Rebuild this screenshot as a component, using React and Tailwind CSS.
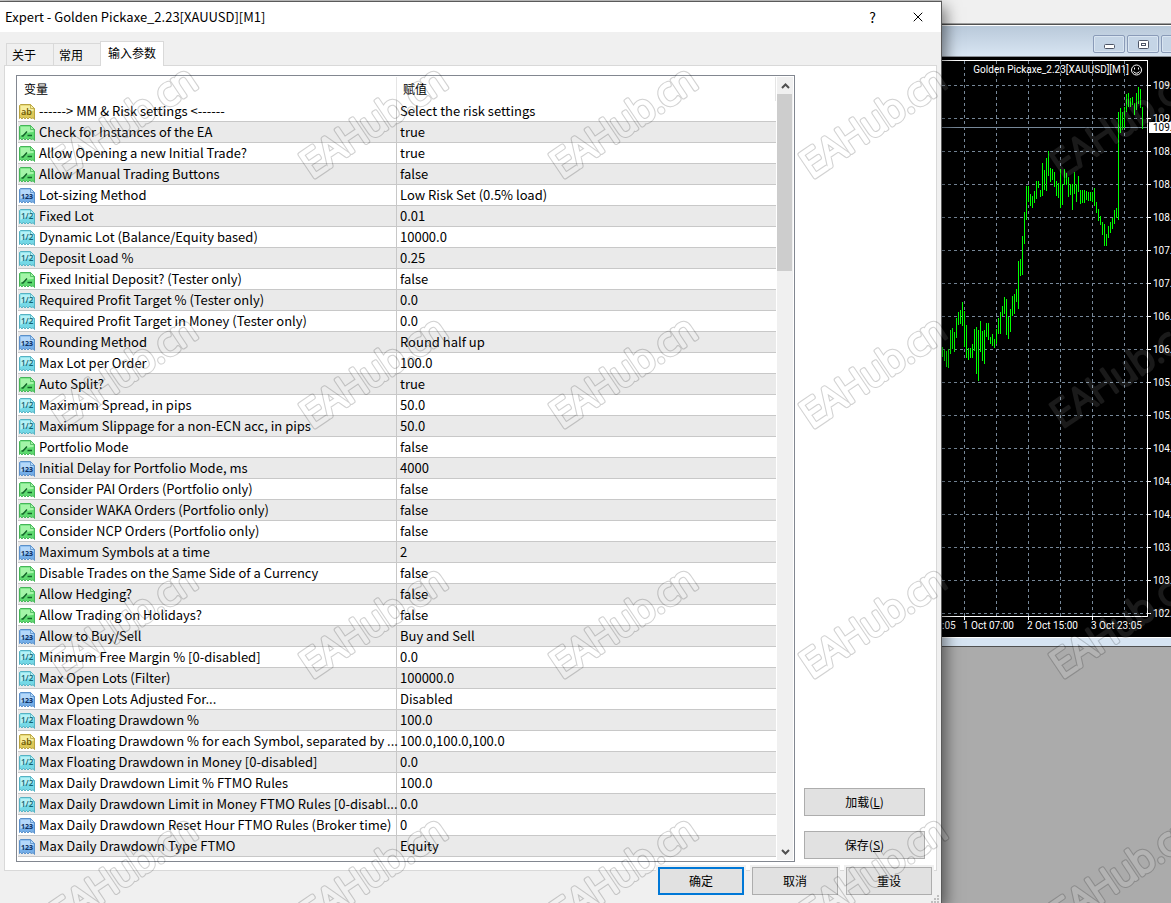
import React from "react";
import clsx from "clsx";
import { X } from "lucide-react";

const params = [
  ["ab", "------> MM & Risk settings <------", "Select the risk settings"],
  ["bool", "Check for Instances of the EA", "true"],
  ["bool", "Allow Opening a new Initial Trade?", "true"],
  ["bool", "Allow Manual Trading Buttons", "false"],
  ["int", "Lot-sizing Method", "Low Risk Set (0.5% load)"],
  ["real", "Fixed Lot", "0.01"],
  ["real", "Dynamic Lot (Balance/Equity based)", "10000.0"],
  ["real", "Deposit Load %", "0.25"],
  ["bool", "Fixed Initial Deposit? (Tester only)", "false"],
  ["real", "Required Profit Target % (Tester only)", "0.0"],
  ["real", "Required Profit Target in Money (Tester only)", "0.0"],
  ["int", "Rounding Method", "Round half up"],
  ["real", "Max Lot per Order", "100.0"],
  ["bool", "Auto Split?", "true"],
  ["real", "Maximum Spread, in pips", "50.0"],
  ["real", "Maximum Slippage for a non-ECN acc, in pips", "50.0"],
  ["bool", "Portfolio Mode", "false"],
  ["int", "Initial Delay for Portfolio Mode, ms", "4000"],
  ["bool", "Consider PAI Orders (Portfolio only)", "false"],
  ["bool", "Consider WAKA Orders (Portfolio only)", "false"],
  ["bool", "Consider NCP Orders (Portfolio only)", "false"],
  ["int", "Maximum Symbols at a time", "2"],
  ["bool", "Disable Trades on the Same Side of a Currency", "false"],
  ["bool", "Allow Hedging?", "false"],
  ["bool", "Allow Trading on Holidays?", "false"],
  ["int", "Allow to Buy/Sell", "Buy and Sell"],
  ["real", "Minimum Free Margin % [0-disabled]", "0.0"],
  ["real", "Max Open Lots (Filter)", "100000.0"],
  ["int", "Max Open Lots Adjusted For...", "Disabled"],
  ["real", "Max Floating Drawdown %", "100.0"],
  ["ab", "Max Floating Drawdown % for each Symbol, separated by ...", "100.0,100.0,100.0"],
  ["real", "Max Floating Drawdown in Money [0-disabled]", "0.0"],
  ["real", "Max Daily Drawdown Limit % FTMO Rules", "100.0"],
  ["real", "Max Daily Drawdown Limit in Money FTMO Rules [0-disabl...", "0.0"],
  ["int", "Max Daily Drawdown Reset Hour FTMO Rules (Broker time)", "0"],
  ["int", "Max Daily Drawdown Type FTMO", "Equity"],
];

// high / low of every bar, one bar each 2px
const bars = [
  [347, 357], [350, 361], [351, 367], [349, 368], [330, 354], [328, 349], [332, 352], [318, 338],
  [312, 325], [310, 324], [302, 326], [311, 347], [325, 358], [348, 360], [348, 358], [344, 358],
  [329, 351], [327, 374], [330, 381], [321, 352], [331, 361], [330, 364], [323, 337], [323, 340],
  [337, 344], [334, 346], [339, 348], [329, 344], [318, 334], [312, 334], [306, 316], [297, 314],
  [299, 335], [317, 339], [309, 332], [296, 316], [294, 314], [289, 302], [261, 309], [259, 276],
  [236, 275], [212, 244], [186, 220], [186, 202], [194, 206], [196, 208], [191, 203], [181, 199],
  [181, 188], [190, 197], [163, 196], [170, 190], [158, 191], [151, 176], [168, 182], [169, 180],
  [172, 187], [181, 196], [183, 198], [169, 208], [184, 205], [169, 185], [173, 185], [177, 197],
  [184, 195], [184, 210], [172, 194], [184, 202], [176, 192], [190, 204], [190, 203], [190, 203],
  [191, 200], [192, 201], [192, 201], [192, 202], [188, 206], [202, 213], [209, 221], [216, 225],
  [222, 235], [224, 246], [234, 246], [226, 238], [222, 233], [218, 229], [210, 224], [208, 218],
  [112, 220], [108, 133], [112, 130], [107, 128], [94, 112], [93, 107], [98, 107], [97, 105],
  [103, 115], [93, 110], [87, 104], [89, 108], [107, 129],
];

const prices = [
  "109.", "109.", "108.", "108.", "108.", "107.", "107.", "106.", "106.",
  "105.", "105.", "104.", "104.", "104.", "103.", "103.", "102.",
];

const gridX = [964, 996, 1028, 1060, 1092, 1124];

const iconColors = {
  ab: { light: "#f6eea0", dark: "#dcc858", edge: "#b9a440", ink: "#6b5600" },
  bool: { light: "#a4f5a8", dark: "#5edb70", edge: "#45b558", ink: "#14652a" },
  int: { light: "#b4d8fa", dark: "#74aee8", edge: "#5a90ca", ink: "#10315f" },
  real: { light: "#b5f1f6", dark: "#74d8e6", edge: "#55b2c3", ink: "#14606e" },
};

const TypeIcon = ({ type }) => {
  const c = iconColors[type];
  return (
    <svg width="16" height="16" viewBox="0 0 16 16" className="mt-0.5 shrink-0" aria-hidden="true">
      <path
        d="M1.5 .5H11.5L15.5 4.5V15.5L14 13.5L12.5 15L11 13L9 15L7.5 13.5L6 15L4.5 13L3 15L1.5 13.5L.5 14.5V1.5Z"
        fill={c.dark}
        stroke={c.edge}
      />
      <path d="M1.5 1.5H11L14.5 5V7C10 7 6 8 1.5 11Z" fill={c.light} />
      <path d="M11.5 .5V4.5H15.5Z" fill={c.light} stroke={c.edge} strokeWidth=".8" />
      {type === "bool" && (
        <path d="M2.5 11H4L8 6.5M8.5 10.5H13" fill="none" stroke={c.ink} strokeWidth="1.5" />
      )}
      {type === "ab" && (
        <text x="2" y="11" fontSize="9" fontWeight="600" fontFamily="Open Sans" fill={c.ink}>ab</text>
      )}
      {type === "int" && (
        <text x="2" y="11" fontSize="7" fontWeight="700" fontFamily="Open Sans" fill={c.ink}>123</text>
      )}
      {type === "real" && (
        <text x="2" y="10" fontSize="8" fontWeight="600" fontFamily="Open Sans" fill={c.ink}>1/2</text>
      )}
    </svg>
  );
};

const Tab = ({ active, children }) => (
  <button
    type="button"
    role="tab"
    aria-selected={!!active}
    className={clsx(
      "border border-b-0 border-[#d9d9d9] text-left text-xs",
      active ? "-mb-px h-[25px] w-16 bg-white pb-0.5 pl-[7px]" : "-mr-px h-[22px] w-12 bg-[#f0f0f0] pl-[5px]"
    )}
  >
    {children}
  </button>
);

const DialogButton = ({ primary, className, children }) => (
  <button
    type="button"
    className={clsx(
      "h-7 bg-[#e1e1e1] text-xs",
      primary ? "border-2 border-[#0078d7]" : "border border-[#adadad]",
      className
    )}
  >
    {children}
  </button>
);

const ParamsTable = () => (
  <div className="flex min-w-0 flex-1 border border-[#828790] p-px">
    <div className="min-w-0 flex-1 pb-[3px]">
      <table className="w-full table-fixed border-separate border-spacing-0 text-[13px] leading-5">
        <thead>
          <tr className="h-6 text-xs">
            <th className="w-1/2 border-r border-[#e5e5e5] p-0 pl-1.5 text-left font-normal">变量</th>
            <th className="border-r border-[#e5e5e5] p-0 pl-1.5 text-left font-normal">赋值</th>
          </tr>
        </thead>
        <tbody>
          {params.map(([type, name, value], i) => (
            <tr key={name} className={i % 2 ? "bg-[#eaeaea]" : "bg-white"}>
              <td className="border-r border-b border-[#c8c8c8] p-0 pl-px">
                <div className="flex h-5 items-center gap-1 whitespace-nowrap">
                  <TypeIcon type={type} />
                  {name}
                </div>
              </td>
              <td className="border-b border-[#c8c8c8] p-0 pl-[3px]">{value}</td>
            </tr>
          ))}
        </tbody>
      </table>
    </div>
    <div className="ml-px flex w-4 flex-col bg-[#f0f0f0]">
      <button type="button" aria-label="Scroll up" className="flex h-[17px] items-center justify-center">
        <svg width="9" height="6" viewBox="0 0 9 6">
          <path d="M1 5L4.5 1.5L8 5" fill="none" stroke="#505050" strokeWidth="2" />
        </svg>
      </button>
      <div className="mr-px h-[177px] bg-[#cdcdcd]" />
      <button type="button" aria-label="Scroll down" className="mt-auto flex h-[17px] items-center justify-center">
        <svg width="9" height="6" viewBox="0 0 9 6">
          <path d="M1 1L4.5 4.5L8 1" fill="none" stroke="#505050" strokeWidth="2" />
        </svg>
      </button>
    </div>
  </div>
);

const ExpertDialog = () => (
  <section className="relative z-10 min-w-0 flex-1 border-t border-r border-[#5a5a5a] bg-[#f0f0f0] shadow-[4px_6px_14px_rgba(0,0,0,0.5)]">
    <header className="flex h-[30px] items-center bg-white pl-[5px] text-[13px]">
      <h1 className="flex-1">Expert - Golden Pickaxe_2.23[XAUUSD][M1]</h1>
      <button type="button" aria-label="Help" className="w-[45px] text-sm">?</button>
      <button type="button" aria-label="Close" className="flex w-[46px] justify-center">
        <X size={16} strokeWidth={1.5} />
      </button>
    </header>
    <div role="tablist" className="flex h-[33px] items-end pl-1.5">
      <Tab>关于</Tab>
      <Tab>常用</Tab>
      <Tab active>输入参数</Tab>
    </div>
    <div className="mr-1 ml-1 flex gap-[9px] border border-[#d9d9d9] bg-white pt-[9px] pr-[11px] pb-2 pl-[11px]">
      <ParamsTable />
      <div className="flex w-[121px] flex-col justify-end gap-[15px] pb-[3px]">
        <DialogButton>
          加载(<u>L</u>)
        </DialogButton>
        <DialogButton>
          保存(<u>S</u>)
        </DialogButton>
      </div>
    </div>
    <footer className="relative -mt-1 flex justify-end gap-2 pr-[9px] pb-2">
      <DialogButton primary className="w-[86px] outline-2 outline-[#f0f0f0]">确定</DialogButton>
      <DialogButton className="w-[86px] outline-2 outline-[#f0f0f0]">取消</DialogButton>
      <DialogButton className="w-[86px] outline-2 outline-[#f0f0f0]">重设</DialogButton>
      <svg width="8" height="8" viewBox="0 0 8 8" className="absolute right-0.5 bottom-0" aria-hidden="true">
        <path d="M6 0h2v2h-2zM3 3h2v2h-2zM6 3h2v2h-2zM0 6h2v2h-2zM3 6h2v2h-2zM6 6h2v2h-2z" fill="#bfbfbf" />
      </svg>
    </footer>
  </section>
);

const WindowButton = ({ label, children }) => (
  <button
    type="button"
    aria-label={label}
    className="flex h-[18px] w-8 shrink-0 items-center justify-center rounded-xs border border-[#8a9bb8] bg-[#c5d5e6] shadow-[inset_0_0_0_1px_#d9e5f1]"
  >
    {children}
  </button>
);

const PriceChart = () => (
  <svg
    width="229"
    height="580"
    viewBox="942 57 229 580"
    className="block font-[Roboto,sans-serif] text-[10px]"
    fill="#fff"
  >
    <g stroke="#778899" strokeDasharray="3 3" shapeRendering="crispEdges">
      {gridX.map((x) => (
        <path key={x} d={`M${x + 0.5} 61V616`} />
      ))}
      {prices.map((_, i) => (
        <path key={i} d={`M942 ${85.5 + i * 33}H1147`} />
      ))}
    </g>
    <path d="M942 127.5H1147" stroke="#778899" shapeRendering="crispEdges" />
    <g fill="#00ff00">
      {bars.map(([high, low], i) => (
        <rect key={i} x={942 + i * 2} y={high} width="1" height={low - high} />
      ))}
    </g>
    <path
      d="M942 60.5H1147.5V616.5H942M964.5 616V620M1028.5 616V620M1092.5 616V620"
      fill="none"
      stroke="#fff"
      shapeRendering="crispEdges"
    />
    <text x="1129" y="73" textAnchor="end">Golden Pickaxe_2.23[XAUUSD][M1]</text>
    <g fill="none" stroke="#fff">
      <circle cx="1136.5" cy="70" r="5" />
      <path d="M1133.5 71.5Q1136.5 75 1139.5 71.5M1134.5 67.5V69.5M1138.5 67.5V69.5" />
    </g>
    {prices.map((price, i) => (
      <g key={i}>
        <rect x="1148" y={85 + i * 33} width="3" height="1" />
        <text x="1153" y={89 + i * 33}>{price}</text>
      </g>
    ))}
    <rect x="1149" y="122" width="22" height="11" />
    <text x="1153" y="131" fill="#000">109.</text>
    <text x="942" y="629">:05</text>
    <text x="963" y="629">1 Oct 07:00</text>
    <text x="1027" y="629">2 Oct 15:00</text>
    <text x="1091" y="629">3 Oct 23:05</text>
  </svg>
);

const Workspace = () => (
  <section className="flex w-[229px] shrink-0 flex-col overflow-hidden bg-[#ababab]">
    <div className="h-[23px] bg-[#f0f0f0]" />
    <div className="h-[3px] border-t border-b border-t-[#a0a0a0] border-b-white bg-[#505050]" />
    <div className="flex h-[31px] items-center gap-0.5 border-b border-[#8a8f96] bg-linear-to-b from-[#b9c9da] to-[#d8e5f2] pt-1.5 pl-[151px]">
      <WindowButton label="Minimize">
        <svg width="11" height="5" viewBox="0 0 11 5" className="mt-1">
          <rect x=".5" y=".5" width="10" height="4" rx="1" fill="#fff" stroke="#4d5566" />
        </svg>
      </WindowButton>
      <WindowButton label="Restore">
        <svg width="11" height="9" viewBox="0 0 11 9">
          <rect x=".5" y=".5" width="10" height="8" rx="1" fill="#fff" stroke="#4d5566" />
          <rect x="3.5" y="3.5" width="4" height="2" fill="none" stroke="#4d5566" />
        </svg>
      </WindowButton>
      <WindowButton label="Close" />
    </div>
    <div className="bg-black">
      <PriceChart />
    </div>
    <div className="h-2.5 border-t border-b border-t-white border-b-[#505050] bg-[#d6e4f2]" />
  </section>
);

const marks = [179, 429, 679, 929].flatMap((y) => [62, 312, 562, 812, 1062].map((x) => [x, y]));

const Watermark = () => (
  <svg
    className="pointer-events-none absolute inset-0 z-20 h-full w-full font-['Open_Sans',sans-serif] text-[38px] font-light"
    aria-hidden="true"
  >
    <defs>
      <g id="marks" strokeLinejoin="round">
        {marks.map(([x, y]) => (
          <text key={`${x}-${y}`} transform={`translate(${x} ${y}) rotate(-34)`}>EAHub.cn</text>
        ))}
      </g>
      <mask id="body">
        <use href="#marks" fill="#fff" stroke="#fff" strokeWidth="3" />
      </mask>
      <mask id="ring">
        <use href="#marks" fill="#fff" stroke="#fff" strokeWidth="5" />
        <use href="#marks" fill="#000" stroke="#000" strokeWidth="3" />
      </mask>
    </defs>
    <rect width="100%" height="100%" fill="#fff" fillOpacity=".1" mask="url(#body)" />
    <rect width="100%" height="100%" fill="#000" fillOpacity=".18" mask="url(#ring)" />
  </svg>
);

const App = () => {
  return (
    <main className="relative flex min-h-screen overflow-hidden bg-[#c8c8c8] font-['Noto_Sans_CJK_SC',sans-serif] text-black">
      <div className="flex min-w-0 flex-1 pt-px">
        <ExpertDialog />
      </div>
      <Workspace />
      <Watermark />
    </main>
  );
};

export default App;
